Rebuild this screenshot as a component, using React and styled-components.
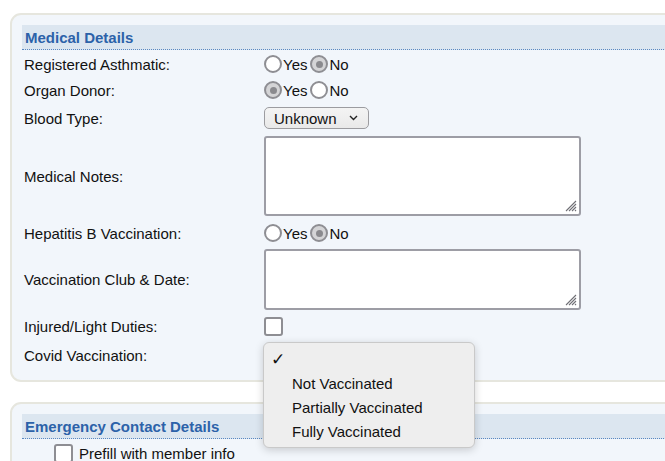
import React from 'react';
import styled, { createGlobalStyle } from 'styled-components';

const GlobalStyle = createGlobalStyle`
  html, body {
    margin: 0;
    background: #fff;
    overflow: hidden;
  }
  body {
    font-family: "Liberation Sans", Arial, sans-serif;
    font-size: 15px;
    color: #111;
  }
`;

const Page = styled('div')`
  display: flex;
  flex-direction: column;
  gap: 20px;
  padding: 13px 0 0 10px;
`;

const Panel = styled('section')`
  position: relative;
  width: 720px;
  padding: 10px 10px ${(p) => p.$bottom || 10}px;
  background: #f2f6fb;
  border: 2px solid #e6e6de;
  border-radius: 11px;
`;

const Heading = styled('h3')`
  margin: 0 0 1px;
  height: 24px;
  padding-left: 3px;
  display: flex;
  align-items: center;
  font-size: 15px;
  font-weight: bold;
  color: #2c62a9;
  background: #dce6f0;
  border-bottom: 1px dotted #5a88c2;
`;

const Row = styled('div')`
  display: grid;
  grid-template-columns: 242px 1fr;
  align-items: center;
  padding: ${(p) => p.$pad || '4px 0'};
`;

const Label = styled('div')`
  padding-left: 2px;
`;

const Field = styled('div')`
  position: relative;
  display: flex;
  align-items: center;
`;

const RadioGroup = styled('div')`
  display: flex;
  align-items: center;
  height: 18px;
  gap: 3px;
`;

const RadioLabel = styled('label')`
  display: flex;
  align-items: center;
  gap: 1px;
`;

const RadioDot = styled('span')`
  box-sizing: border-box;
  width: 18px;
  height: 18px;
  border-radius: 50%;
  border: 2px solid #8e8e93;
  background: ${(p) => (p.$on ? '#d4d4d6' : '#fff')};
  display: flex;
  align-items: center;
  justify-content: center;

  &::after {
    content: '';
    display: ${(p) => (p.$on ? 'block' : 'none')};
    width: 7px;
    height: 7px;
    border-radius: 50%;
    background: #8a8a8e;
  }
`;

const Select = styled('div')`
  box-sizing: border-box;
  width: 105px;
  height: 22px;
  padding: 0 10px 0 9px;
  display: flex;
  align-items: center;
  justify-content: space-between;
  border: 1px solid #9c9ca0;
  border-radius: 5px;
  background: linear-gradient(#f4f4f4, #e9e9e9);
  visibility: ${(p) => (p.$hidden ? 'hidden' : 'visible')};
`;

const TextBox = styled('div')`
  position: relative;
  box-sizing: border-box;
  width: 317px;
  height: ${(p) => p.$h}px;
  background: #fff;
  border: 2px solid #9d9da5;
  border-radius: 3px;
`;

const Grip = styled('svg')`
  position: absolute;
  right: 2px;
  bottom: 2px;
`;

const Check = styled('span')`
  box-sizing: border-box;
  display: inline-block;
  width: 19px;
  height: 19px;
  border: 2px solid #8e8e93;
  border-radius: 3px;
  background: #fff;
`;

const Menu = styled('ul')`
  position: absolute;
  z-index: 5;
  top: -2px;
  left: -1px;
  box-sizing: border-box;
  width: 212px;
  margin: 0;
  padding: 4px 0;
  list-style: none;
  background: #eeeeee;
  border: 1px solid #c9c9c9;
  border-radius: 6px;
  box-shadow: 0 2px 8px rgba(0, 0, 0, 0.18);
`;

const MenuItem = styled('li')`
  height: 24px;
  display: flex;
  align-items: center;
  padding-left: 28px;
  position: relative;
`;

const Tick = styled('span')`
  position: absolute;
  left: 7px;
  font-family: "DejaVu Sans", sans-serif;
  font-weight: bold;
  font-size: 17px;
`;

const PrefillRow = styled('label')`
  display: flex;
  align-items: center;
  gap: 6px;
  padding: 4px 0 0 32px;
`;

const ResizeGrip = () => (
  <Grip width="12" height="12" viewBox="0 0 12 12">
    <g stroke="#6f6f75" strokeWidth="1.1">
      <line x1="1" y1="11" x2="11" y2="1" />
      <line x1="4" y1="11" x2="11" y2="4" />
      <line x1="7" y1="11" x2="11" y2="7" />
      <line x1="10" y1="11" x2="11" y2="10" />
    </g>
  </Grip>
);

const YesNo = ({ value }) => (
  <RadioGroup>
    <RadioLabel>
      <RadioDot $on={value === 'yes'} />
      Yes
    </RadioLabel>
    <RadioLabel>
      <RadioDot $on={value === 'no'} />
      No
    </RadioLabel>
  </RadioGroup>
);

const Chevron = () => (
  <svg width="9" height="6" viewBox="0 0 9 6">
    <path d="M1 1l3.5 3.5L8 1" fill="none" stroke="#222" strokeWidth="1.4" />
  </svg>
);

const covidOptions = ['', 'Not Vaccinated', 'Partially Vaccinated', 'Fully Vaccinated'];

const App = () => {
  return (
    <>
      <GlobalStyle />
      <Page>
        <Panel $bottom={10}>
          <Heading>Medical Details</Heading>
          <Row>
            <Label>Registered Asthmatic:</Label>
            <Field><YesNo value="no" /></Field>
          </Row>
          <Row>
            <Label>Organ Donor:</Label>
            <Field><YesNo value="yes" /></Field>
          </Row>
          <Row>
            <Label>Blood Type:</Label>
            <Field>
              <Select>
                Unknown
                <Chevron />
              </Select>
            </Field>
          </Row>
          <Row $pad="3px 0 4px">
            <Label>Medical Notes:</Label>
            <Field>
              <TextBox $h={80}><ResizeGrip /></TextBox>
            </Field>
          </Row>
          <Row>
            <Label>Hepatitis B Vaccination:</Label>
            <Field><YesNo value="no" /></Field>
          </Row>
          <Row $pad="3px 0">
            <Label>Vaccination Club &amp; Date:</Label>
            <Field>
              <TextBox $h={61}><ResizeGrip /></TextBox>
            </Field>
          </Row>
          <Row>
            <Label>Injured/Light Duties:</Label>
            <Field><Check /></Field>
          </Row>
          <Row>
            <Label>Covid Vaccination:</Label>
            <Field>
              <Select $hidden />
              <Menu>
                {covidOptions.map((opt, i) => (
                  <MenuItem key={i}>
                    {i === 0 && <Tick>✓</Tick>}
                    {opt}
                  </MenuItem>
                ))}
              </Menu>
            </Field>
          </Row>
        </Panel>
        <Panel>
          <Heading>Emergency Contact Details</Heading>
          <PrefillRow>
            <Check />
            Prefill with member info
          </PrefillRow>
        </Panel>
      </Page>
    </>
  );
};

export default App;
